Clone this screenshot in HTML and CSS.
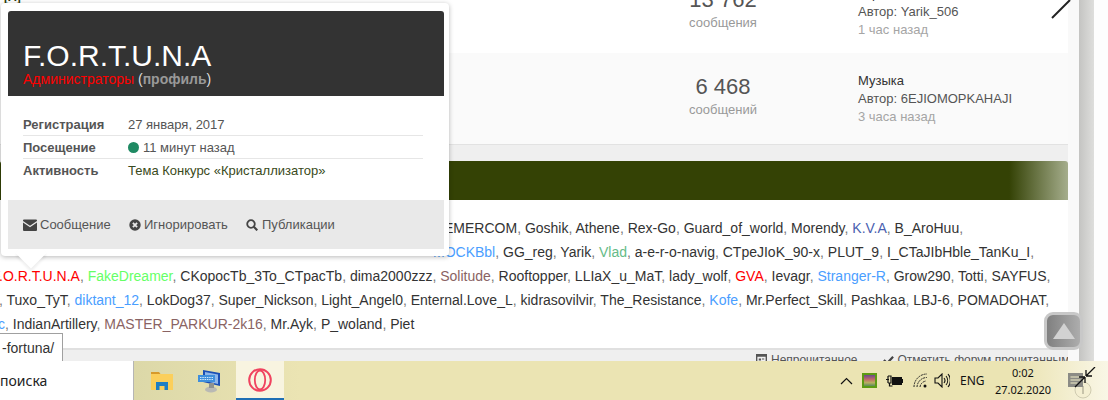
FILE: index.html
```html
<!DOCTYPE html>
<html lang="ru">
<head>
  <meta charset="UTF-8">
  <title>F.O.R.T.U.N.A</title>
  <link rel="stylesheet" href="styles.css">
</head>
<body>
  <div class="browser">
    <!-- Forum page -->
    <div class="content">
      <div class="forum-card">
        <div class="forum-row">
          <div class="row-tag">[A]</div>
          <div class="stat">
            <div class="stat-num">13 762</div>
            <div class="stat-label">сообщения</div>
          </div>
          <div class="last-post">
            <div class="post-title">Игры</div>
            <div>Автор: Yarik_506</div>
            <div class="post-time">1 час назад</div>
          </div>
        </div>
        <div class="forum-row forum-row-alt">
          <div class="stat">
            <div class="stat-num">6 468</div>
            <div class="stat-label">сообщений</div>
          </div>
          <div class="last-post">
            <div class="post-title">Музыка</div>
            <div>Автор: 6EJIOMOPKAHAJI</div>
            <div class="post-time">3 часа назад</div>
          </div>
        </div>
      </div>

      <div class="section-head"></div>

      <div class="names">
        <div class="names-line line-1">EMERCOM<i>,</i> Goshik<i>,</i> Athene<i>,</i> Rex-Go<i>,</i> Guard_of_world<i>,</i> Morendy<i>,</i> <span class="c-indigo">K.V.A</span><i>,</i> B_AroHuu<i>,</i></div>
        <div class="names-line line-2"><span class="c-blue">MOCKBbl</span><i>,</i> GG_reg<i>,</i> Yarik<i>,</i> <span class="c-teal">Vlad</span><i>,</i> a-e-r-o-navig<i>,</i> CTpeJIoK_90-x<i>,</i> PLUT_9<i>,</i> I_CTaJIbHble_TanKu_I<i>,</i></div>
        <div class="names-line line-3"><span class="c-red">F.O.R.T.U.N.A</span><i>,</i> <span class="c-green">FakeDreamer</span><i>,</i> CKopocTb_3To_CTpacTb<i>,</i> dima2000zzz<i>,</i> <span class="c-brown">Solitude</span><i>,</i> Rooftopper<i>,</i> LLIaX_u_MaT<i>,</i> lady_wolf<i>,</i> <span class="c-red">GVA</span><i>,</i> Ievagr<i>,</i> <span class="c-blue">Stranger-R</span><i>,</i> Grow290<i>,</i> Totti<i>,</i> SAYFUS<i>,</i></div>
        <div class="names-line line-4"><i>,</i> Tuxo_TyT<i>,</i> <span class="c-blue">diktant_12</span><i>,</i> LokDog37<i>,</i> Super_Nickson<i>,</i> Light_Angel0<i>,</i> Enternal.Love_L<i>,</i> kidrasovilvir<i>,</i> The_Resistance<i>,</i> <span class="c-blue">Kofe</span><i>,</i> Mr.Perfect_Skill<i>,</i> Pashkaa<i>,</i> LBJ-6<i>,</i> POMADOHAT<i>,</i></div>
        <div class="names-line line-5"><span class="c-blue">c</span><i>,</i> IndianArtillery<i>,</i> <span class="c-brown">MASTER_PARKUR-2k16</span><i>,</i> Mr.Ayk<i>,</i> P_woland<i>,</i> Piet</div>
      </div>

      <div class="bottom-bar">
        <svg class="bar-icon" viewBox="0 0 12 12"><path d="M0 0h12v12H0z" fill="#555"/><path d="M1.500 3h9v7.500h-9z" fill="#f0f0f0"/><path d="M3 5h2.500v2H3zM6.500 5H9v1H6.500zM6.500 7.500H9v1.500H6.500zM3 8h2.500v1H3z" fill="#555"/></svg>
        <span class="bar-link">Непрочитанное</span>
        <svg class="bar-icon bar-check" viewBox="0 0 12 12"><path d="M1 6.500l3.500 3.500L11 3" fill="none" stroke="#444" stroke-width="2.400"/></svg>
        <span class="bar-link">Отметить форум прочитанным</span>
      </div>
    </div>
    <div class="gutter"><div class="gutter-shade"></div></div>

    <!-- Slider arrow, clipped by the top of the window -->
    <svg class="slider-arrow" viewBox="0 0 20 20"><path d="M1 19L19 1" fill="none" stroke="#222" stroke-width="2"/></svg>

    <!-- Scroll to top -->
    <div class="to-top"><div class="to-top-arrow"></div></div>

    <!-- Profile hover card -->
    <div class="popup">
      <div class="popup-head">
        <div class="popup-name">F.O.R.T.U.N.A</div>
        <div class="popup-group"><span class="group-red">Администраторы</span> <span class="group-link">(<b>профиль</b>)</span></div>
      </div>
      <div class="popup-info">
        <div class="info-row"><div class="info-label">Регистрация</div><div>27 января, 2017</div></div>
        <div class="info-row"><div class="info-label">Посещение</div><div class="info-online"><span class="dot"></span>11 минут назад</div></div>
        <div class="info-row"><div class="info-label">Активность</div><div class="info-topic">Тема Конкурс «Кристаллизатор»</div></div>
      </div>
      <div class="popup-foot">
        <span class="foot-link foot-msg">
          <svg class="foot-icon" viewBox="0 0 14 12"><path d="M0 1.500Q0 .5 1 .5h12q1 0 1 1v.6L7 6.800 0 2.100zM0 3.600L7 8.300l7-4.700V11q0 1-1 1H1q-1 0-1-1z" fill="#444"/></svg>
          Сообщение
        </span>
        <span class="foot-link foot-ignore">
          <svg class="foot-icon" viewBox="0 0 12 12"><circle cx="6" cy="6" r="5.700" fill="#444"/><path d="M3.900 3.900l4.200 4.200M8.100 3.900L3.900 8.100" stroke="#e8e8e8" stroke-width="1.800"/></svg>
          Игнорировать
        </span>
        <span class="foot-link foot-search">
          <svg class="foot-icon" viewBox="0 0 12 12"><circle cx="5" cy="5" r="3.800" fill="none" stroke="#444" stroke-width="1.800"/><path d="M7.800 7.800L11.300 11.300" stroke="#444" stroke-width="2.200"/></svg>
          Публикации
        </span>
      </div>
      <div class="popup-tip"></div>
    </div>

    <!-- Link preview of the browser -->
    <div class="url-tip">-fortuna/</div>
  </div>

  <!-- Windows taskbar -->
  <div class="taskbar">
    <div class="search-box">поиска</div>
    <div class="task-item task-first">
      <svg class="task-icon" viewBox="0 0 22 18"><path d="M0 0h8l1.500 2H0z" fill="#d79a2b"/><path d="M0 2h22v16H0z" fill="#fbcf5b"/><path d="M5 18v-8h12v8h-3.500v-4h-5v4z" fill="#1f7fc4"/></svg>
    </div>
    <div class="task-item">
      <svg class="task-icon task-pc" viewBox="0 0 24 24"><path d="M5 1l17 3v13L5 13z" fill="#1b4fb5"/><path d="M7 3l13 2.500v9.500L7 12z" fill="#8fb6ea"/><path d="M0 6h17v7H0z" fill="#3f8fdc"/><path d="M2 8.500h13M2 10.500h13" stroke="#cfe6fb" stroke-width="1" stroke-dasharray="1.500 .8"/><ellipse cx="13" cy="20.500" rx="6" ry="3" fill="#b9b9b4"/><path d="M11 14h5v5h-5z" fill="#8f9290"/></svg>
    </div>
    <div class="task-item task-active">
      <svg class="opera-icon" viewBox="0 0 24 24"><circle cx="12" cy="12" r="10.800" fill="none" stroke="#f0435f" stroke-width="2"/><ellipse cx="12" cy="12" rx="5.200" ry="9.500" fill="none" stroke="#f0435f" stroke-width="1.800"/></svg>
    </div>
    <div class="tray">
      <svg class="tray-chevron" viewBox="0 0 13 8"><path d="M1 7l5.500-5.500L12 7" fill="none" stroke="#111" stroke-width="1.200"/></svg>
      <div class="tray-color"></div>
      <svg class="tray-battery" viewBox="0 0 17 13"><path d="M0 5.500h3M2 2v7M2 2h3v7H2M3.500 9v3h3" fill="none" stroke="#111" stroke-width="1.200"/><path d="M6 3h10v8H6z" fill="#111"/><path d="M16 5h1v4h-1z" fill="#111"/></svg>
      <svg class="tray-wifi" viewBox="0 0 15 15"><path d="M1 14A13 13 0 0 1 14 1M4 14A10 10 0 0 1 14 4.500M7 14A7 7 0 0 1 13 8" fill="none" stroke="#222" stroke-width="1" stroke-dasharray="2 .8"/><circle cx="12" cy="13" r="1.500" fill="#111"/></svg>
      <svg class="tray-sound" viewBox="0 0 16 15"><path d="M1 5h3l4-4v13l-4-4H1z" fill="none" stroke="#111" stroke-width="1.100"/><path d="M10 5a4 4 0 0 1 0 5M12 3a7 7 0 0 1 0 9M14 1a10 10 0 0 1 0 13" fill="none" stroke="#111" stroke-width="1.100"/></svg>
      <div class="tray-lang">ENG</div>
      <div class="tray-clock"><div>0:02</div><div>27.02.2020</div></div>
      <svg class="notes-icon" viewBox="0 0 30 33"><circle cx="15" cy="23" r="8" fill="#f4efd2" stroke="#cfcbb0"/><path d="M15 19v8" stroke="#b9b59c" stroke-width="1.500"/><path d="M0 6h15v14H0z" fill="#8b8b85"/><path d="M2.500 10h10M2.500 13h10M2.500 16h7" stroke="#f2edc8" stroke-width="1.200"/><path d="M7 20L17 10M17 10h-6M17 10v6M27 0L18 9M18 9h6M18 9V3" fill="none" stroke="#111" stroke-width="1.300"/></svg>
    </div>
  </div>
</body>
</html>
```

FILE: styles.css
```css
body {
  margin: 0;
  height: 400px;
  overflow: hidden;
  background-color: #ffffff;
  font-family: "Liberation Sans", Arial, sans-serif;
  font-size: 13px;
  color: #444444;
}
.browser {
  position: relative;
  display: flex;
  height: 361px;
  overflow: hidden;
}
.content {
  width: 1068px;
  flex-shrink: 0;
  background-color: #efefef;
  display: flex;
  flex-direction: column;
}
.gutter {
  flex: 1;
  display: flex;
  background-color: #f9f9f9;
  padding-left: 11px;
}
.gutter-shade {
  width: 15px;
  background: linear-gradient(to right, #c4c4c2, #dededc);
}
.gutter::after {
  content: "";
  flex: 1;
  background-color: #fdfdfd;
}
/* Forum rows */
.forum-card {
  height: 145px;
  flex-shrink: 0;
  border-bottom: 1px solid #e2e2e2;
  box-sizing: border-box;
  background-color: #ffffff;
}
.forum-row {
  position: relative;
  height: 53px;
  display: flex;
  align-items: flex-end;
  padding-left: 663px;
  padding-bottom: 14px;
  box-sizing: border-box;
  background-color: #ffffff;
}
.forum-row-alt {
  height: 91px;
  background-color: #fafafa;
  padding-bottom: 18px;
}
.row-tag {
  position: absolute;
  left: 4px;
  top: -10px;
  font-size: 12px;
  font-weight: bold;
  color: #2c3a0a;
}
.stat {
  width: 120px;
  margin-bottom: 7px;
  text-align: center;
}
.stat-num {
  font-size: 22px;
  line-height: 26px;
  color: #555555;
}
.stat-label {
  font-size: 13px;
  line-height: 18px;
  margin-top: 1px;
  color: #999999;
}
.last-post {
  margin-left: 75px;
  font-size: 13px;
  line-height: 18px;
  color: #555555;
}
.post-title {
  color: #333333;
}
.post-time {
  color: #a5a5a5;
}
.section-head {
  height: 39px;
  flex-shrink: 0;
  margin-top: 16px;
  border-radius: 3px 3px 0 0;
  background: linear-gradient(to right, #344205 94.500%, #a5ad8c 100%);
}
/* Online list */
.names {
  height: 150px;
  flex-shrink: 0;
  box-sizing: border-box;
  padding-top: 16px;
  background-color: #ffffff;
  border-bottom: 2px solid #e0e0e0;
  font-size: 14px;
  color: #333333;
  overflow: hidden;
}
.names-line {
  line-height: 24px;
  white-space: nowrap;
}
.names-line i {
  font-style: normal;
  color: #777777;
}
.line-1 { margin-left: 444px; }
.line-2 { margin-left: 433px; }
.line-3 { margin-left: -8px; }
.line-4 { margin-left: -1px; }
.line-5 { margin-left: -2px; }
.c-blue { color: #4a9eff; }
.c-red { color: #ff0000; }
.c-green { color: #66ff66; }
.c-teal { color: #66bb88; }
.c-brown { color: #8a6363; }
.c-indigo { color: #4a5fb0; }
.bottom-bar {
  display: flex;
  align-items: flex-start;
  padding-left: 756px;
  padding-top: 3px;
  font-size: 12px;
  line-height: 14px;
  white-space: nowrap;
  color: #555555;
}
.bar-icon {
  width: 11px;
  height: 11px;
  flex-shrink: 0;
  margin-top: 1px;
  margin-right: 4px;
}
.bar-check {
  margin-left: 25px;
}
.slider-arrow {
  position: absolute;
  left: 1051px;
  top: -1px;
  width: 20px;
  height: 20px;
}
.to-top {
  position: absolute;
  left: 1044px;
  top: 312px;
  width: 39px;
  height: 38px;
  box-sizing: border-box;
  border: 3px solid #c8c8c8;
  border-radius: 9px;
  background: linear-gradient(to right, #808080, #adadad);
  display: flex;
  align-items: center;
  justify-content: center;
}
.to-top-arrow {
  width: 0;
  height: 0;
  border-left: 11px solid transparent;
  border-right: 11px solid transparent;
  border-bottom: 16px solid #d2d2d2;
}
/* Hover card */
.popup {
  position: absolute;
  z-index: 1;
  left: 1px;
  top: 3px;
  width: 448px;
  height: 253px;
  box-sizing: border-box;
  padding: 8px 5px 7px 7px;
  background-color: #ffffff;
  border-radius: 4px;
  box-shadow: 0 1px 5px rgba(0,0,0,0.28);
  display: flex;
  flex-direction: column;
}
.popup-head {
  height: 85px;
  flex-shrink: 0;
  box-sizing: border-box;
  padding: 30px 15px 0;
  background-color: #333333;
  border-radius: 3px 3px 0 0;
}
.popup-name {
  font-size: 30px;
  line-height: 30px;
  color: #ffffff;
}
.popup-group {
  font-size: 14px;
  line-height: 16px;
  color: #dddddd;
}
.group-red {
  color: #ff0000;
}
.group-link b {
  color: #999999;
}
.popup-info {
  flex: 1;
  padding: 17px 21px 0 15px;
}
.info-row {
  display: flex;
  height: 23px;
  line-height: 23px;
  box-sizing: border-box;
  border-bottom: 1px solid #e6e6e6;
  font-size: 13px;
  color: #555555;
}
.info-row:last-child {
  border-bottom: none;
}
.info-label {
  width: 105px;
  flex-shrink: 0;
  font-weight: bold;
}
.dot {
  display: inline-block;
  width: 11px;
  height: 11px;
  margin-right: 4px;
  border-radius: 50%;
  background-color: #1f8a63;
  vertical-align: -1px;
}
.info-topic {
  color: #3a4a20;
}
.popup-foot {
  height: 49px;
  flex-shrink: 0;
  box-sizing: border-box;
  padding-left: 15px;
  display: flex;
  align-items: center;
  background-color: #e9e9e9;
  font-size: 13px;
  color: #555555;
}
.foot-link {
  display: flex;
  align-items: center;
}
.foot-icon {
  height: 12px;
  margin-right: 3px;
}
.foot-msg {
  width: 106px;
}
.foot-ignore {
  width: 117px;
}
.foot-search .foot-icon {
  margin-right: 4px;
}
.popup-tip {
  position: absolute;
  z-index: -1;
  left: 19px;
  bottom: -8px;
  width: 22px;
  height: 22px;
  background-color: #ffffff;
  transform: rotate(45deg);
  box-shadow: 2px 2px 3px rgba(0,0,0,0.07);
}
.url-tip {
  position: absolute;
  z-index: 2;
  left: -1px;
  top: 333px;
  width: 64px;
  height: 28px;
  box-sizing: border-box;
  padding-left: 2px;
  background-color: #ffffff;
  border: 1px solid #a0a0a0;
  border-bottom: none;
  font-size: 14px;
  line-height: 29px;
  color: #333333;
}
/* Taskbar */
.taskbar {
  height: 39px;
  display: flex;
  align-items: stretch;
  background: linear-gradient(to right, #dcd8a8 134px, #ebe4b3 300px, #ebe4b3 1020px, #f9f6e6 1108px);
  font-family: "Noto Sans", sans-serif;
  color: #111111;
}
.search-box {
  width: 134px;
  flex-shrink: 0;
  box-sizing: border-box;
  background-color: #ffffff;
  border-right: 1px solid #b5b5b5;
  font-size: 14px;
  line-height: 39px;
  color: #222222;
}
.task-item {
  width: 48px;
  flex-shrink: 0;
  display: flex;
  align-items: center;
  justify-content: center;
}
.task-first {
  margin-left: 4px;
}
.task-icon {
  width: 22px;
  height: 18px;
}
.task-pc {
  width: 24px;
  height: 24px;
}
.task-active {
  margin-left: 2px;
  box-sizing: border-box;
  background-color: #f8f4e0;
  border-bottom: 2px solid #1f6fb5;
}
.opera-icon {
  width: 24px;
  height: 24px;
}
.tray {
  flex: 1;
  min-width: 0;
  display: flex;
  align-items: center;
  padding-left: 556px;
}
.tray-chevron {
  width: 13px;
  height: 8px;
  flex-shrink: 0;
}
.tray-color {
  width: 15px;
  height: 15px;
  flex-shrink: 0;
  margin-left: 9px;
  box-sizing: border-box;
  border: 2px solid #5c9a12;
  background: linear-gradient(#6a4a8a, #c06a6a 40%, #b8b060 70%, #5a8a5a);
}
.tray-battery {
  width: 17px;
  height: 13px;
  flex-shrink: 0;
  margin-left: 9px;
}
.tray-wifi {
  width: 15px;
  height: 15px;
  flex-shrink: 0;
  margin-left: 10px;
}
.tray-sound {
  width: 16px;
  height: 15px;
  flex-shrink: 0;
  margin-left: 6px;
}
.tray-lang {
  width: 23px;
  flex-shrink: 0;
  margin-left: 10px;
  font-size: 12px;
}
.tray-clock {
  width: 60px;
  flex-shrink: 0;
  margin-left: 10px;
  text-align: center;
  font-size: 11px;
  line-height: 17px;
}
.notes-icon {
  width: 30px;
  height: 33px;
  flex-shrink: 0;
  align-self: flex-start;
  margin-left: 15px;
  margin-top: 6px;
}
```
